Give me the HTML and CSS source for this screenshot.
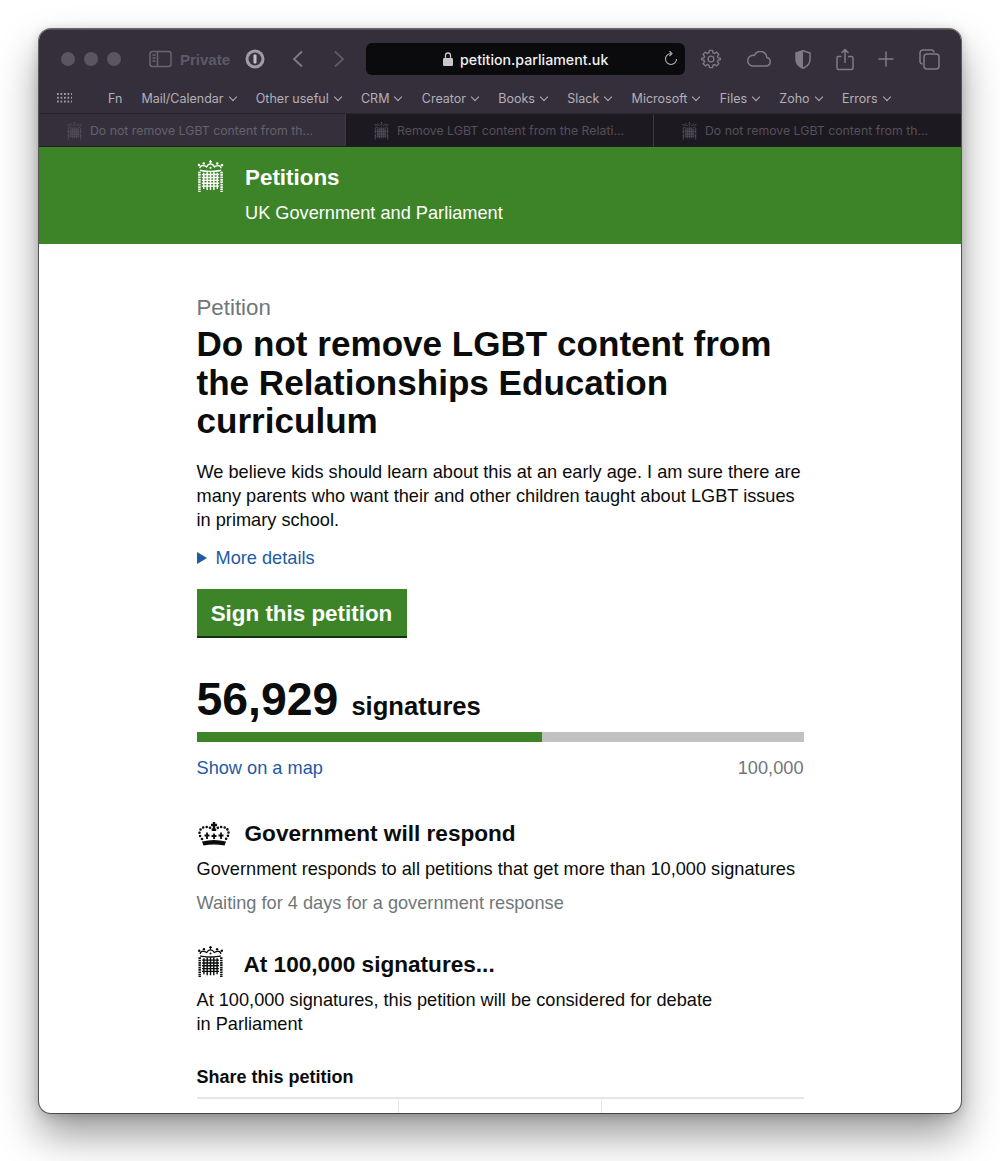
FILE: index.html
```html
<!DOCTYPE html>
<html>
<head>
  <title>Do not remove LGBT content from the Relationships Education curriculum</title>
  <link rel="stylesheet" href="styles.css">
</head>
<body>
  <svg class="defs" width="0" height="0">
    <symbol id="portcullis" viewBox="0 0 28 34">
      <g fill="none" stroke="currentColor">
        <path d="M7 13v17M10.500 12v19M14 12v19M17.500 12v19M21 13v17M5 15h18M5 18h18M5 21h18M5 24h18M5 27h18" stroke-width="1.500"/>
        <path d="M2.500 12v21M25.500 12v21" stroke-width="2.600" stroke-dasharray="1.800 .7"/>
        <path d="M3 10.500c5 1.600 17 1.600 22 0" stroke-width="1.500"/>
        <path d="M3 8.500C3 5 7 5 10 7c1-2 2.500-3 4-3s3 1 4 3c3-2 7-2 7 1.500" stroke-width="1.300"/>
        <path d="M14 0v4M12.500 1.500h3" stroke-width="1.200"/>
      </g>
      <g fill="currentColor">
        <circle cx="2" cy="5" r="1.300"/><circle cx="7" cy="3.500" r="1.300"/><circle cx="21" cy="3.500" r="1.300"/><circle cx="26" cy="5" r="1.300"/>
        <circle cx="14" cy="8" r="1.100"/>
      </g>
    </symbol>
  </svg>

  <div class="window">
    <header class="toolbar">
      <div class="traffic">
        <span class="dot"></span><span class="dot"></span><span class="dot"></span>
      </div>
      <svg class="tool sidebar-icon" width="24" height="18" viewBox="0 0 24 18">
        <rect x="1" y="1.500" width="21" height="15" rx="2.500"/>
        <path d="M8.500 1.500v15M3.500 5h3M3.500 8h3M3.500 11h3"/>
      </svg>
      <span class="private">Private</span>
      <svg class="onepass" width="20" height="20" viewBox="0 0 20 20">
        <circle cx="10" cy="10" r="9.500" fill="#a09ca6"/>
        <circle cx="10" cy="10" r="6.500" fill="#3a3340"/>
        <rect x="8.500" y="5.500" width="3" height="9" rx="1" fill="#c4c1c8"/>
      </svg>
      <svg class="tool back" width="12" height="18" viewBox="0 0 12 18"><path d="M10 1.500 2 9l8 7.500"/></svg>
      <svg class="tool forward" width="12" height="18" viewBox="0 0 12 18"><path d="M2 1.500 10 9l-8 7.500"/></svg>
      <div class="address">
        <svg class="lock" width="10" height="14" viewBox="0 0 10 14">
          <path d="M2.500 6V3.500a2.500 2.500 0 0 1 5 0V6" fill="none" stroke="#c8c8c8" stroke-width="1.300"/>
          <rect x="0" y="6" width="10" height="8" rx="1.200" fill="#c8c8c8"/>
        </svg>
        <span class="url">petition.parliament.uk</span>
        <svg class="reload" width="14" height="16" viewBox="0 0 14 16">
          <path d="M7 2.500a5.500 5.500 0 1 0 5.500 5.500M5.500 0 8 2.500 5.500 5"/>
        </svg>
      </div>
      <div class="tools">
        <svg class="tool" width="20" height="20" viewBox="0 0 22 22">
          <circle cx="11" cy="11" r="3.200"/>
          <path d="M9.300 1.500h3.400l.5 2.600 1.800.8 2.200-1.500 2.400 2.400-1.500 2.200.8 1.800 2.600.5v1.400l-2.600.5-.8 1.800 1.500 2.200-2.400 2.400-2.200-1.500-1.800.8-.5 2.600H9.300l-.5-2.600-1.800-.8-2.200 1.500-2.400-2.400 1.500-2.200-.8-1.800-2.600-.5v-1.400l2.600-.5.8-1.800-1.500-2.200 2.400-2.400 2.200 1.500 1.800-.8z"/>
        </svg>
        <svg class="tool" width="25" height="16" viewBox="0 0 25 16">
          <path d="M6 15h14a4.300 4.300 0 0 0 .8-8.500A6.500 6.500 0 0 0 8.300 4.500 5.300 5.300 0 0 0 6 15z"/>
        </svg>
        <svg class="tool shield" width="16" height="19" viewBox="0 0 16 19">
          <path d="M8 .7 1 3v6.500c0 4.500 3.500 7.300 7 8.800 3.500-1.500 7-4.300 7-8.800V3z"/>
          <path class="fill" d="M8 .7 1 3v6.500c0 4.500 3.500 7.300 7 8.800z"/>
        </svg>
        <svg class="tool" width="18" height="23" viewBox="0 0 18 23">
          <path d="M5.500 8.500H2a1.500 1.500 0 0 0-1 1.500v10a1.500 1.500 0 0 0 1.500 1.500h13a1.500 1.500 0 0 0 1.500-1.500V10a1.500 1.500 0 0 0-1.500-1.500h-3.500M9 15V1.500M5.500 5 9 1.500 12.500 5"/>
        </svg>
        <svg class="tool" width="16" height="16" viewBox="0 0 16 16"><path d="M8 .5v15M.5 8h15"/></svg>
        <svg class="tool" width="21" height="21" viewBox="0 0 21 21">
          <rect x="5" y="5" width="15" height="15" rx="3"/>
          <path d="M3.500 15A2.500 2.500 0 0 1 1 12.500V4a3 3 0 0 1 3-3h8.500A2.500 2.500 0 0 1 15 3.500"/>
        </svg>
      </div>
    </header>

    <nav class="bookmarks">
      <span class="apps"></span>
      <a class="fn">Fn</a>
      <a class="menu">Mail/Calendar</a>
      <a class="menu">Other useful</a>
      <a class="menu">CRM</a>
      <a class="menu">Creator</a>
      <a class="menu">Books</a>
      <a class="menu">Slack</a>
      <a class="menu">Microsoft</a>
      <a class="menu">Files</a>
      <a class="menu">Zoho</a>
      <a class="menu">Errors</a>
    </nav>

    <div class="tabs">
      <div class="tab active"><svg class="tab-icon"><use href="#portcullis"/></svg><span>Do not remove LGBT content from th...</span></div>
      <div class="tab"><svg class="tab-icon"><use href="#portcullis"/></svg><span>Remove LGBT content from the Relati...</span></div>
      <div class="tab"><svg class="tab-icon"><use href="#portcullis"/></svg><span>Do not remove LGBT content from th...</span></div>
    </div>

    <div class="site-header">
      <svg class="site-logo"><use href="#portcullis"/></svg>
      <div>
        <div class="site-name">Petitions</div>
        <div class="site-sub">UK Government and Parliament</div>
      </div>
    </div>

    <main class="main">
      <p class="label">Petition</p>
      <h1>Do not remove LGBT content from the Relationships Education curriculum</h1>
      <p class="intro">We believe kids should learn about this at an early age. I am sure there are many parents who want their and other children taught about LGBT issues in primary school.</p>
      <a class="details"><span class="arrow"></span>More details</a>
      <a class="sign">Sign this petition</a>

      <div class="count"><strong>56,929</strong><span>signatures</span></div>
      <div class="bar"><div class="bar-fill" style="width: 56.929%"></div></div>
      <div class="bar-notes"><a>Show on a map</a><span>100,000</span></div>

      <section class="threshold respond">
        <h2>
          <svg class="crown" width="34" height="24" viewBox="0 0 34 24">
            <path d="M17 0v9M14 3h6" fill="none" stroke="#0b0c0c" stroke-width="2.400"/>
            <path d="M5 19.500c8-2 16-2 24 0l-1.500 4c-7-1.500-14-1.500-21 0z" fill="#0b0c0c"/>
            <path d="M5 17C0 11 3 5 9 5c3.500 0 6 1.500 8 4 2-2.500 4.500-4 8-4 6 0 9 6 4 12" fill="none" stroke="#0b0c0c" stroke-width="2.600" stroke-linecap="round" stroke-dasharray="0 3.400"/>
            <path d="M10 10.500v6.500M7.500 13.500h5M24 10.500v6.500M21.500 13.500h5M17 11.500v5.500M14.500 14h5" fill="none" stroke="#0b0c0c" stroke-width="1.800"/>
          </svg>
          Government will respond
        </h2>
        <p>Government responds to all petitions that get more than 10,000 signatures</p>
        <p class="muted">Waiting for 4 days for a government response</p>
      </section>

      <section class="threshold debate">
        <h2><svg class="small-logo"><use href="#portcullis"/></svg>At 100,000 signatures...</h2>
        <p>At 100,000 signatures, this petition will be considered for debate<br>in Parliament</p>
      </section>

      <h3>Share this petition</h3>
      <div class="share"><div></div><div></div><div></div></div>
    </main>
  </div>
</body>
</html>
```

FILE: styles.css
```css
html, body {
  margin: 0;
  padding: 0;
}
body {
  background-color: #fff;
  font-family: "Liberation Sans", Arial, sans-serif;
  color: #0b0c0c;
  padding: 29px 39px 48px;
  overflow: hidden;
}
.defs {
  display: block;
  height: 0;
}
.window {
  height: 1084px;
  border-radius: 12px;
  overflow: hidden;
  background-color: #fff;
  display: flex;
  flex-direction: column;
  box-shadow: 0 0 0 1px rgba(0, 0, 0, 0.55), 0 22px 40px rgba(0, 0, 0, 0.4), 0 2px 12px rgba(0, 0, 0, 0.2);
}

/* browser chrome */
.toolbar {
  height: 55px;
  flex: none;
  display: flex;
  align-items: center;
  background-color: #352f3b;
  border-top: 1px solid #57525c;
  box-sizing: border-box;
  padding: 4px 0 0 22px;
}
.traffic {
  display: flex;
  gap: 9px;
  margin-right: 28px;
}
.dot {
  width: 14px;
  height: 14px;
  border-radius: 50%;
  background-color: #5a5560;
}
.tool {
  flex: none;
  fill: none;
  stroke: #7f7b85;
  stroke-width: 1.500;
}
.tool .fill {
  fill: #7f7b85;
  stroke: none;
}
.back, .forward {
  stroke-width: 1.800;
}
.back {
  margin-left: 27px;
}
.forward {
  margin-left: 29px;
  stroke: #5f5a65;
}
.sidebar-icon {
  stroke: #6a6570;
}
.private {
  font-size: 15px;
  font-weight: bold;
  color: #5f5a65;
  margin: 0 15px 0 7px;
}
.onepass {
  flex: none;
}
.address {
  width: 319px;
  height: 32px;
  margin-left: 21px;
  background-color: #0b0a0c;
  border-radius: 6px;
  flex: none;
  display: flex;
  align-items: center;
  position: relative;
  box-sizing: border-box;
  padding-left: 77px;
}
.lock {
  margin-right: 7px;
}
.url {
  font-family: "Inter", sans-serif;
  font-size: 14.200px;
  font-weight: 500;
  color: #f0f0f0;
}
.reload {
  position: absolute;
  right: 7px;
  top: 8px;
  fill: none;
  stroke: #b5b5b5;
  stroke-width: 1.100;
}
.tools {
  display: flex;
  align-items: center;
  gap: 24.500px;
  margin-left: 16px;
}
.bookmarks {
  height: 29px;
  flex: none;
  background-color: #352f3b;
  display: flex;
  align-items: center;
  padding: 0 0 1px 18px;
  font-family: "Inter", sans-serif;
  font-size: 12.500px;
  color: #b3afb8;
  box-sizing: border-box;
}
.apps {
  width: 15px;
  height: 11px;
  margin-right: 36px;
  background-image: radial-gradient(circle at 1px 1px, #a09ca6 1.100px, transparent 1.200px);
  background-size: 3.500px 3.800px;
}
.fn {
  margin-right: 19px;
}
.menu {
  display: flex;
  align-items: center;
  margin-right: 19.300px;
}
.menu::after {
  content: "";
  width: 5px;
  height: 5px;
  border-right: 1.500px solid #b3afb8;
  border-bottom: 1.500px solid #b3afb8;
  transform: rotate(45deg);
  margin: -3px 1px 0 6px;
}
.tabs {
  height: 33px;
  flex: none;
  display: flex;
  background-color: #1d1920;
  border-top: 1px solid #29242d;
  box-sizing: border-box;
  font-family: "Inter", sans-serif;
  font-size: 12.300px;
  color: #55505a;
}
.tab {
  flex: 1;
  display: flex;
  align-items: center;
  padding: 1px 0 0 28px;
  border-left: 1px solid #3e3943;
  white-space: nowrap;
}
.tab.active {
  flex: 0 0 306px;
  box-sizing: border-box;
  background-color: #352f3b;
  color: #66616c;
  border-left: none;
}
.tab-icon {
  width: 15px;
  height: 18px;
  margin-right: 8px;
  color: #55505a;
}

/* site header */
.site-header {
  height: 98px;
  flex: none;
  background-color: #3c8427;
  border-top: 1px solid #202020;
  box-sizing: border-box;
  display: flex;
  align-items: flex-start;
  padding: 13px 0 0 158px;
  color: #fff;
}
.site-logo {
  width: 27px;
  height: 33px;
  margin-right: 21px;
  flex: none;
}
.site-name {
  font-size: 22.400px;
  font-weight: bold;
  line-height: 35px;
}
.site-sub {
  font-size: 18.200px;
  line-height: 24px;
  margin-top: 6px;
}

/* petition */
.main {
  padding: 50px 157.500px 0;
  flex: 1;
  font-size: 18.200px;
  line-height: 24px;
}
.main p {
  margin: 0;
}
.main a {
  color: #1d5aa3;
}
.main .label {
  font-size: 22.300px;
  line-height: 27px;
  color: #6f777b;
}
h1 {
  margin: 4px 0 0;
  font-size: 35.100px;
  line-height: 38.500px;
}
.main .intro {
  margin-top: 19px;
}
.details {
  display: flex;
  align-items: center;
  margin-top: 14px;
}
.arrow {
  width: 0;
  height: 0;
  border-left: 10px solid #1d5aa3;
  border-top: 6px solid transparent;
  border-bottom: 6px solid transparent;
  margin-right: 9px;
}
.sign {
  display: block;
  width: 210px;
  height: 49px;
  margin-top: 19px;
  box-sizing: border-box;
  background-color: #3c8427;
  border-bottom: 2px solid #15300d;
  text-align: center;
  font-size: 22.400px;
  font-weight: bold;
  line-height: 49px;
  color: #fff !important;
}
.count {
  display: flex;
  align-items: baseline;
  margin-top: 34px;
  font-weight: bold;
}
.count strong {
  font-size: 46.400px;
  line-height: 54px;
}
.count span {
  font-size: 25.600px;
  margin-left: 13px;
}
.bar {
  height: 10px;
  margin-top: 6px;
  background-color: #bfc1c3;
}
.bar-fill {
  height: 100%;
  background-color: #3c8427;
}
.bar-notes {
  display: flex;
  justify-content: space-between;
  margin-top: 14px;
  color: #6f777b;
}
.threshold h2 {
  display: flex;
  align-items: center;
  margin: 0;
  font-size: 22.600px;
  line-height: 34px;
}
.respond {
  margin-top: 37px;
}
.respond p {
  margin-top: 6px;
}
.main .muted {
  margin-top: 10px;
  color: #6f777b;
}
.crown {
  margin-right: 14px;
}
.debate {
  margin-top: 33px;
}
.debate p {
  margin-top: 6px;
}
.small-logo {
  width: 27px;
  height: 32px;
  margin-right: 20px;
  margin-top: -6px;
}
h3 {
  margin: 29px 0 0;
  font-size: 18px;
  line-height: 24px;
}
.share {
  display: flex;
  height: 16px;
  margin-top: 8px;
  border-top: 2px solid #e6e6e6;
}
.share div {
  flex: 1;
  border-left: 1px solid #e6e6e6;
}
.share div:first-child {
  border-left: none;
}
```
